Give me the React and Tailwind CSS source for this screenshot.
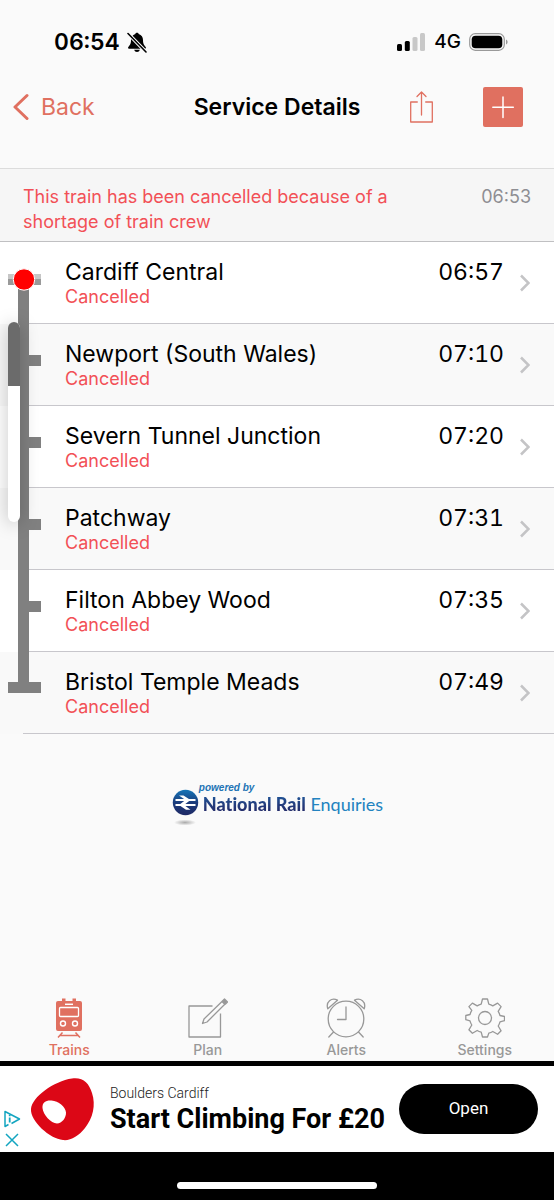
import React from 'react';

const stops = [
    { name: 'Cardiff Central', time: '06:57', status: 'Cancelled' },
    { name: 'Newport (South Wales)', time: '07:10', status: 'Cancelled' },
    { name: 'Severn Tunnel Junction', time: '07:20', status: 'Cancelled' },
    { name: 'Patchway', time: '07:31', status: 'Cancelled' },
    { name: 'Filton Abbey Wood', time: '07:35', status: 'Cancelled' },
    { name: 'Bristol Temple Meads', time: '07:49', status: 'Cancelled' },
];

const BellOffIcon = () => (
    <svg width="20" height="21" viewBox="0 0 20 21" aria-hidden="true">
        <path d="M10 .8c-.9 0-1.500.5-1.700 1.200C5.500 2.800 4 5.200 4 8c0 4-1.200 5.300-2.500 6.700-.9 1-.5 2 .7 2h15.600c1.200 0 1.600-1 .7-2C17.200 13.300 16 12 16 8c0-2.800-1.500-5.200-4.300-6C11.500 1.300 10.900.8 10 .8z" />
        <path d="M7.200 17.800h5.600c-.4 1.400-1.500 2.200-2.800 2.200s-2.400-.8-2.800-2.200z" />
        <path d="M1 1.500 19 20" stroke="#fafafa" strokeWidth="3.600" />
        <path d="M1 1.500 19 20" stroke="#000" strokeWidth="1.600" strokeLinecap="round" />
    </svg>
);

const StatusBar = () => (
    <div className="flex items-center justify-between pt-7 pr-[46px] pl-[54px]">
        <div className="flex items-center gap-[7px]">
            <span className="text-[23px] leading-7 font-semibold tabular-nums">06:54</span>
            <BellOffIcon />
        </div>
        <div className="flex items-center gap-2">
            <svg width="29" height="18" viewBox="0 0 29 18" aria-hidden="true">
                <rect x="0" y="11" width="5" height="7" rx="1.500" />
                <rect x="7.800" y="8" width="5" height="10" rx="1.500" />
                <rect x="15.500" y="4" width="5" height="14" rx="1.500" fill="#c8c8c8" />
                <rect x="23" y="0" width="5" height="18" rx="1.500" fill="#c8c8c8" />
            </svg>
            <span className="text-[19px] leading-7 font-medium">4G</span>
            <svg width="39" height="18" viewBox="0 0 39 18" aria-hidden="true">
                <rect x=".7" y=".7" width="34.600" height="16.600" rx="5.500" fill="none" stroke="#999" strokeWidth="1.200" />
                <rect x="2.700" y="2.700" width="30.600" height="12.600" rx="3.800" />
                <path d="M37 6.500c1 .4 1.600 1.400 1.600 2.500s-.6 2.100-1.600 2.500z" fill="#999" />
            </svg>
        </div>
    </div>
);

const NavBar = () => (
    <header className="grid grid-cols-[1fr_auto_1fr] items-center px-3 pt-[31px] pb-[41px]">
        <a href="#back" className="flex items-center gap-3 text-[#e07060]">
            <svg width="17" height="28" viewBox="0 0 17 28" fill="none" stroke="currentColor" strokeWidth="3" strokeLinecap="round" strokeLinejoin="round" aria-hidden="true">
                <path d="M15 2.500 3 14l12 11.500" />
            </svg>
            <span className="text-[23px] leading-7">Back</span>
        </a>
        <h1 className="text-[23px] leading-7 font-semibold">Service Details</h1>
        <div className="flex items-center justify-end gap-[49px] pr-[19px] text-[#e07060]">
            <button type="button" aria-label="Share">
                <svg className="block" width="25" height="34" viewBox="0 0 25 34" fill="none" stroke="currentColor" strokeWidth="1.300" strokeLinecap="round" strokeLinejoin="round" aria-hidden="true">
                    <path d="M8.300 12H1.700v20h21.600V12h-6.600" />
                    <path d="M12.500 25V2M8 6.500 12.500 2 17 6.500" />
                </svg>
            </button>
            <button type="button" aria-label="Add" className="rounded-xs bg-[#e07060]">
                <svg className="block" width="40" height="40" viewBox="0 0 40 40" stroke="#fff" strokeWidth="1.500" strokeLinecap="round" aria-hidden="true">
                    <path d="M20 10v20.500M9.800 20.200h20.500" />
                </svg>
            </button>
        </div>
    </header>
);

// Line diagram drawn beside each calling point
const Track = ({ first, last }) => (
    <svg className="shrink-0" width="65" height="82" viewBox="0 0 65 82" aria-hidden="true">
        <path d="M23 81.500h42" stroke="#c8c7cc" strokeWidth="1" />
        {first && (
            <>
                <path d="M8 32h33v5H8z" fill="#c6c6c6" />
                <path d="M8 37h33v6H8z" fill="#999" />
                <path d="M18 38h11v44H18z" fill="#808080" />
                <circle cx="24" cy="37.500" r="10.700" fill="red" stroke="#fff" strokeWidth="1" />
            </>
        )}
        {last && <path d="M18 0h11v30h12v11H8V30h10z" fill="#808080" />}
        {!first && !last && <path d="M18 0h11v31h12v11H29v40H18z" fill="#808080" />}
    </svg>
);

const StopRow = ({ stop, first, last }) => (
    <li className="odd:bg-white even:bg-[#f9f9f9]">
        <a href="#stop" className="flex">
            <Track first={first} last={last} />
            <div className="flex flex-1 border-b border-[#c8c7cc] pt-4 pr-6 pb-[15px]">
                <div className="flex-1">
                    <p className="text-[23px] leading-7">{stop.name}</p>
                    <p className="text-[18px] leading-[22px] text-[#f25056]">{stop.status}</p>
                </div>
                <span className="text-[23px] leading-7 tabular-nums">{stop.time}</span>
                <svg className="ml-4 self-center" width="10" height="18" viewBox="0 0 10 18" fill="none" stroke="#c4c4c6" strokeWidth="2.500" aria-hidden="true">
                    <path d="M1 1.500 8.500 9 1 16.500" />
                </svg>
            </div>
        </a>
    </li>
);

const VolumeHud = () => (
    <div className="absolute top-20 left-2 h-[200px] w-3 overflow-hidden rounded-full bg-white shadow-[0_2px_18px_rgba(0,0,0,0.25)]">
        <div className="h-[32%] bg-[#6b6b6b]" />
    </div>
);

const PoweredBy = () => (
    <div className="flex justify-center pt-12">
        <div className="flex gap-1">
            <svg className="mt-1" width="28" height="42" viewBox="0 0 28 42" aria-hidden="true">
                <defs>
                    <linearGradient id="badge" x1="0" y1="0" x2="0" y2="1">
                        <stop offset="0" stopColor="#1676b8" />
                        <stop offset=".5" stopColor="#1b3c7c" />
                        <stop offset="1" stopColor="#1f2a66" />
                    </linearGradient>
                    <radialGradient id="shade">
                        <stop offset="0" stopColor="#aaa" />
                        <stop offset="1" stopColor="#aaa" stopOpacity="0" />
                    </radialGradient>
                </defs>
                <circle cx="14.500" cy="16.500" r="12.700" fill="url(#badge)" />
                <path d="M4.500 14h20M4.500 19h20" stroke="#fff" strokeWidth="2.200" />
                <path d="M8 9.500h4.500l7 4.500-6.500 5 6.500 4.700H15L8 19l6.500-5z" fill="#fff" />
                <ellipse cx="14" cy="36.500" rx="11" ry="3" fill="url(#shade)" />
            </svg>
            <div>
                <p className="-ml-1 text-[10px] leading-3 font-bold text-[#2374b5] italic font-['Liberation_Sans',sans-serif]">powered by</p>
                <p className="text-[18px] leading-5 font-['Lato','Open_Sans',sans-serif] [font-variant-ligatures:none]">
                    <span className="bg-linear-to-b from-[#1a5c9f] to-[#232260] bg-clip-text font-black text-transparent">National Rail</span>{' '}
                    <span className="text-[#2383c0]">Enquiries</span>
                </p>
            </div>
        </div>
    </div>
);

const TrainIcon = () => (
    <svg width="40" height="40" viewBox="0 0 40 40" aria-hidden="true">
        <path d="M9 3h4V.5h3.500V3h7V.5H27V3h4q2 0 2 2v26q0 2-2 2H9q-2 0-2-2V5q0-2 2-2z" fill="currentColor" />
        <rect x="10.500" y="9.500" width="19" height="9" rx="1" fill="none" stroke="#fff" strokeWidth="1.300" />
        <path d="M16 6.300h8" stroke="#fff" strokeWidth="1.500" />
        <circle cx="14" cy="25.500" r="2.500" fill="none" stroke="#fff" strokeWidth="1.400" />
        <circle cx="26" cy="25.500" r="2.500" fill="none" stroke="#fff" strokeWidth="1.400" />
        <path d="M13.500 34.500 9 39.500M26.500 34.500l4.500 5M10.500 37.500h19" stroke="currentColor" strokeWidth="1.500" />
    </svg>
);

const PlanIcon = () => (
    <svg width="40" height="40" viewBox="0 0 40 40" fill="none" stroke="currentColor" strokeWidth="1.300" strokeLinejoin="round" aria-hidden="true">
        <path d="M24.500 8H1v31h31.500V15.500" />
        <path d="M14.500 25.500 16 21 34 3.500l2.800 2.800L19 24z" />
        <path d="M34.500 3 36.500 1l3 3-2 2z" fill="currentColor" />
    </svg>
);

const AlertsIcon = () => (
    <svg width="40" height="40" viewBox="0 0 40 40" fill="none" stroke="currentColor" strokeWidth="1.300" strokeLinecap="round" strokeLinejoin="round" aria-hidden="true">
        <circle cx="20" cy="21" r="17.800" />
        <path d="M20 9v12.500h-8.500" />
        <path d="M1.800 10.800C-.5 4 5.500-.8 11.500 2.200z" />
        <path d="M38.200 10.800C40.500 4 34.500-.8 28.500 2.200z" />
        <path d="M7.500 34 2.800 39M32.500 34l4.700 5" />
    </svg>
);

const SettingsIcon = () => (
    <svg width="40" height="40" viewBox="0 0 40 40" fill="none" stroke="currentColor" strokeWidth="1.300" strokeLinejoin="round" aria-hidden="true">
        <circle cx="20" cy="20" r="6.500" />
        <path d="M17.500 1h5l1.300 5.200q2.200.5 4 1.700l4.800-2.800 3.500 3.500-2.900 4.700q1.300 1.900 1.800 4.200l4.500 1v4.200l-4.500 1.200q-.5 2.200-1.800 4.100l2.900 4.800-3.500 3.500-4.800-2.800q-1.800 1.100-4 1.600L22.500 39h-5l-1.300-4.900q-2.200-.5-4-1.600l-4.800 2.800-3.500-3.500 2.900-4.800Q5.500 25.100 5 22.900L.8 21.700v-4.200l4.200-1q.5-2.300 1.800-4.200L3.900 8.600l3.500-3.500 4.800 2.800q1.800-1.200 4-1.700z" />
    </svg>
);

const tabs = [
    { label: 'Trains', Icon: TrainIcon, active: true },
    { label: 'Plan', Icon: PlanIcon },
    { label: 'Alerts', Icon: AlertsIcon },
    { label: 'Settings', Icon: SettingsIcon },
];

const TabBar = () => (
    <nav className="mt-auto grid grid-cols-4 pb-[3px]">
        {tabs.map(({ label, Icon, active }) => (
            <a
                key={label}
                href="#tab"
                className={`flex flex-col items-center gap-1 ${active ? 'text-[#e07060]' : 'text-[#989898]'}`}
            >
                <Icon />
                <span className="text-[14px] leading-4 font-medium">{label}</span>
            </a>
        ))}
    </nav>
);

const AdBanner = () => (
    <aside className="flex items-center border-t-[5px] border-black bg-white pr-4 pl-[3px] font-['Roboto',sans-serif]">
        <div className="flex flex-col gap-1 self-end pb-1 text-[#13a5c0]">
            <a href="#adchoices" aria-label="AdChoices">
                <svg className="block" width="18" height="18" viewBox="0 0 18 18" fill="none" stroke="currentColor" strokeWidth="1.500" strokeLinejoin="round" aria-hidden="true">
                    <path d="M5.500 14.500 2 16.500V1.500L16.500 9l-8 4.500" />
                    <path d="M6.700 7.500v5M6.700 4.800v1.400" strokeWidth="1.800" />
                </svg>
            </a>
            <button type="button" aria-label="Close ad">
                <svg className="block" width="18" height="16" viewBox="0 0 18 16" stroke="currentColor" strokeWidth="1.500" aria-hidden="true">
                    <path d="m3 2 12 12M15 2 3 14" />
                </svg>
            </button>
        </div>
        <svg className="ml-[9px] shrink-0" width="66" height="66" viewBox="0 0 66 66" aria-hidden="true">
            <path d="M1 33C2 21 24 5 42 2.500 53 1 59 7 62 17c4 12 1 25-7 35-6 8-15 13-22 12C20 63 0 45 1 33z" fill="#dc0716" />
            <path d="M12.500 32c-.5-6 4-8 9-7.500 7 .5 14 6 14.500 12 .3 5-4 11-9 11-6 0-14-9-14.500-15.500z" fill="#fff" />
        </svg>
        <div className="ml-[14px] flex-1 py-[17px]">
            <p className="text-[14px] leading-5 font-light text-[#222]">Boulders Cardiff</p>
            <p className="text-[27px] leading-8 font-bold whitespace-nowrap">Start Climbing For £20</p>
        </div>
        <button type="button" className="h-[50px] w-[139px] shrink-0 rounded-full bg-black text-[17px] text-white">
            Open
        </button>
    </aside>
);

function App() {
    return (
        <div className="flex min-h-screen flex-col bg-[#fafafa] font-['Inter',sans-serif] text-black">
            <StatusBar />
            <NavBar />
            <section className="flex items-start justify-between border-t border-b border-t-[#dcdcdc] border-b-[#c0c0c2] bg-[#f6f6f6] px-[23px] pt-[15px] pb-[7px] text-[18px] leading-[25px]">
                <p className="max-w-[380px] text-[#f25056]">This train has been cancelled because of a shortage of train crew</p>
                <time className="text-[#8e8e93]">06:53</time>
            </section>
            <main className="relative">
                <ul>
                    {stops.map((stop, i) => (
                        <StopRow key={stop.name} stop={stop} first={i === 0} last={i === stops.length - 1} />
                    ))}
                </ul>
                <VolumeHud />
            </main>
            <PoweredBy />
            <TabBar />
            <AdBanner />
            <footer className="flex justify-center bg-black pt-[30px] pb-[11px]">
                <div className="h-[7px] w-[36%] rounded-full bg-white" />
            </footer>
        </div>
    );
}

export default App;
